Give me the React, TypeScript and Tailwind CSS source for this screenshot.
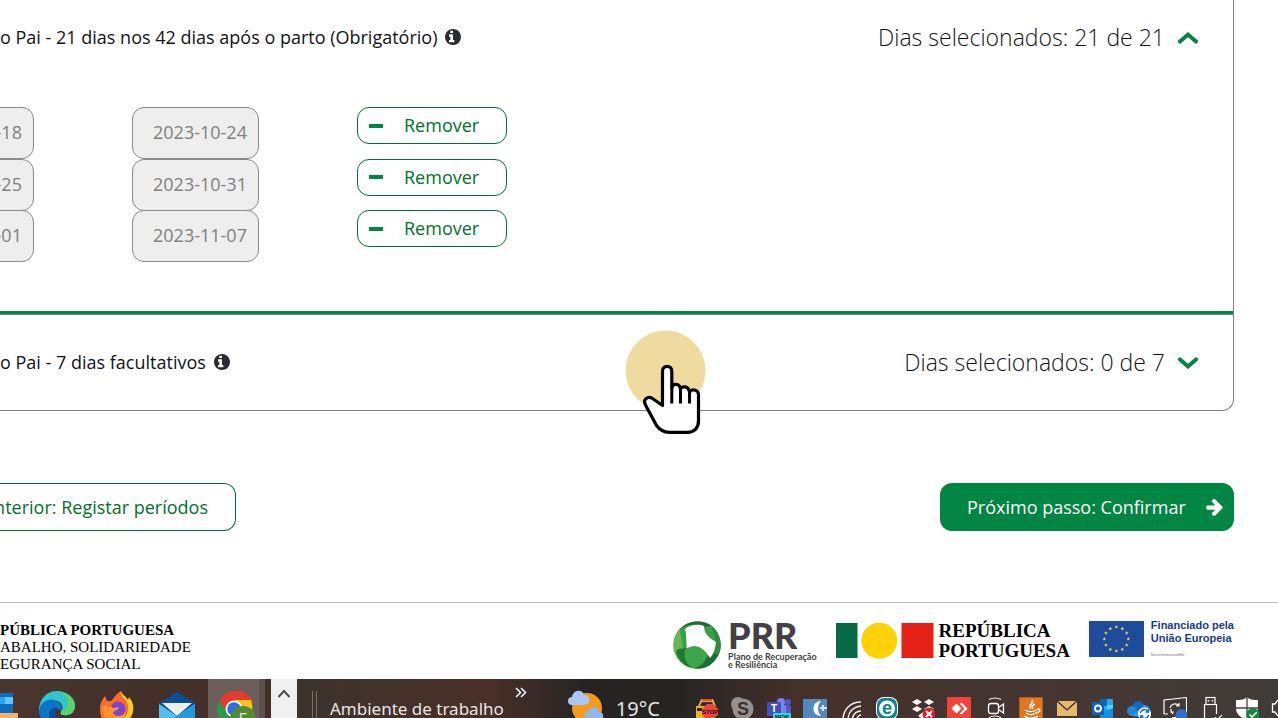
import type { ReactNode } from "react";

const periods = [
  { start: "2023-10-18", end: "2023-10-24" },
  { start: "2023-10-25", end: "2023-10-31" },
  { start: "2023-11-01", end: "2023-11-07" },
];

const InfoIcon = () => (
  <svg viewBox="128 128 1536 1536" className="w-4 h-4 text-[#2b2b33]" fill="currentColor">
    <path d="M1024 1376v-160q0-14-9-23t-23-9h-96v-512q0-14-9-23t-23-9h-320q-14 0-23 9t-9 23v160q0 14 9 23t23 9h96v320h-96q-14 0-23 9t-9 23v160q0 14 9 23t23 9h448q14 0 23-9t9-23zM896 480v-160q0-14-9-23t-23-9h-192q-14 0-23 9t-9 23v160q0 14 9 23t23 9h192q14 0 23-9t9-23zM1664 896q0 209-103 385.5t-279.5 279.5-385.5 103-385.5-103-279.5-279.5-103-385.5 103-385.5 279.5-279.5 385.5-103 385.5 103 279.5 279.5 103 385.5z" />
  </svg>
);

const ArrowRight = () => (
  <svg viewBox="96 192 1536 1536" className="w-[17px] h-[17px]" fill="currentColor">
    <path d="M1600 960q0 54-37 91l-651 651q-39 37-91 37-51 0-90-37l-75-75q-38-38-38-91t38-91l293-293h-704q-52 0-84.5-37.5t-32.5-90.5v-128q0-53 32.5-90.5t84.5-37.5h704l-293-294q-38-36-38-90t38-90l75-75q38-38 90-38 53 0 91 38l651 651q37 35 37 90z" />
  </svg>
);

const Chevron = ({ up }: { up: boolean }) => (
  <svg viewBox="0 0 22 14" className="w-[22px] h-[14px] text-[#008542]" fill="none" stroke="currentColor" strokeWidth="4" strokeLinecap="round">
    {up ? <path d="M3 11.6 L11 4.6 L19 11.6" /> : <path d="M3 4.4 L11 11.4 L19 4.4" />}
  </svg>
);

type PeriodHeaderProps = { title: string; count: string; open: boolean };

const PeriodHeader = ({ title, count, open }: PeriodHeaderProps) => (
  <button
    type="button"
    aria-expanded={open}
    className="w-full flex items-center justify-between pb-0.5 pr-[34px] text-left text-[#121216]"
  >
    <span className="flex items-center gap-2 text-[18px] leading-6">
      {title}
      <InfoIcon />
    </span>
    <span className="flex items-center gap-3 text-[23px] leading-8 font-light">
      {count}
      <Chevron up={open} />
    </span>
  </button>
);

const PeriodRow = ({ start, end }: { start: string; end: string }) => (
  <div className="flex items-start gap-[98px] -ml-[93px]">
    <input
      aria-label="Data de início"
      defaultValue={start}
      disabled
      className="w-[127px] h-[52px] pl-5 pb-0.5 rounded-xl border border-[#8a8a8a] bg-[#eeeeee] text-[#808080]"
    />
    <input
      aria-label="Data de fim"
      defaultValue={end}
      disabled
      className="w-[127px] h-[52px] pl-5 pb-0.5 rounded-xl border border-[#8a8a8a] bg-[#eeeeee] text-[#808080]"
    />
    <button
      type="button"
      className="w-[150px] h-[37px] pl-[11px] flex items-center gap-[21px] rounded-xl border border-[#00702d] bg-white text-[#00702d]"
    >
      <span className="w-[14px] h-1 bg-[#008542]" />
      Remover
    </button>
  </div>
);

const HandCursor = () => (
  <svg viewBox="0 0 82 106" className="absolute left-[625px] top-[330px] w-[82px] h-[106px] pointer-events-none">
    <circle cx="40.5" cy="40.5" r="40" fill="#efdb9f" />
    <path
      d="M37.5 75.5 V41 C37.5 34.7 46.8 34.7 46.8 41 V58 C47.5 53 55 53 55.5 59.5 C56 55.5 64 55.5 64.5 62.5 C65.5 58.5 73.5 59 73.5 65 V91 C73.5 98 69 102.3 62.5 102.3 H44 C38 102.3 34.5 99.5 31.5 95.5 L20.5 75 C17.5 69.5 23 65.5 27.5 68.5 Z"
      fill="#fff"
      stroke="#000"
      strokeWidth="3.2"
      strokeLinejoin="round"
    />
    <path d="M46.8 56 V73.5 M55.5 59 V73.5 M64.5 62 V73.5" fill="none" stroke="#000" strokeWidth="3" />
  </svg>
);

/* Footer logos */

const PrrLogo = () => (
  <div className="flex items-start gap-[7px]">
    <svg viewBox="0 0 48 48" className="w-12 h-12">
      <circle cx="24" cy="24" r="23.7" fill="#37a048" />
      <path d="M7 9 C15 -1 30 -2 39 5 L30 6 C21 1 13 4 7 9Z" fill="#1f6b35" />
      <path d="M38 4 C49 13 50 27 45 35 L40 34 C44 25 42 12 38 4Z" fill="#2f8a3e" />
      <path d="M45 34 C39 46 30 49 20 47 C32 43 34 35 38 30Z" fill="#1d6e35" />
      <path d="M4 36 C-1 25 0 14 7 9 L10 28Z" fill="#68b552" />
      <path d="M5 28 L14 27 C11 33 12 40 19 47 C11 45 5 38 3 31Z" fill="#1d7a36" />
      <path d="M12 8 C18 3 26 3 31 5 C31 11 34 16 43 21 C42 29 40 34 37 37 C32 28 22 22 14 28 C13 22 14 15 12 8Z" fill="#fff" />
      <path d="M12 29 C18 23 28 24 33 32 C35 38 29 46 21 47 C13 44 10 36 12 29Z" fill="#3da64b" />
    </svg>
    <div className="font-['Lato'] text-[#414044] font-bold text-[9px] leading-[8px]">
      <div className="font-black text-[36px] leading-[28px] mb-1">PRR</div>
      Plano de Recuperação
      <br />e Resiliência
    </div>
  </div>
);

const RepublicLogo = () => (
  <div className="flex items-start gap-[5px]">
    <svg viewBox="0 0 98 36" className="w-[98px] h-9 mt-0.5">
      <rect width="21.5" height="35" fill="#056b47" />
      <circle cx="43.3" cy="17.7" r="18" fill="#ffd106" />
      <rect x="65.5" width="32" height="35" fill="#e62117" />
    </svg>
    <div className="font-['Liberation_Serif'] font-bold text-[19px] leading-5 text-black">
      REPÚBLICA
      <br />
      PORTUGUESA
    </div>
  </div>
);

const stars = Array.from({ length: 12 }, (_, i) => {
  const angle = (i * Math.PI) / 6;
  return { x: 27.3 + 12 * Math.sin(angle), y: 18 - 12 * Math.cos(angle) };
});

const EuLogo = () => (
  <div className="flex items-start gap-[7px]">
    <svg viewBox="0 0 55 36" className="w-[55px] h-9">
      <rect width="55" height="36" fill="#1e4c9a" />
      {stars.map((s, i) => (
        <path
          key={i}
          transform={`translate(${s.x} ${s.y})`}
          d="M0 -2 L.5 -.6 L1.9 -.6 L.8 .3 L1.2 1.6 L0 .8 L-1.2 1.6 L-.8 .3 L-1.9 -.6 L-.5 -.6Z"
          fill="#f4e04d"
        />
      ))}
    </svg>
    <div className="font-['Liberation_Sans'] text-[#173c8e] text-[11px] leading-[13px] font-bold -mt-0.5">
      Financiado pela
      <br />
      União Europeia
      <div className="text-[4px] leading-[20px] font-normal text-gray-500">NextGenerationEU</div>
    </div>
  </div>
);

/* Taskbar */

const AppIcon = ({ children }: { children: ReactNode }) => (
  <svg viewBox="0 0 36 36" className="w-9 h-9 shrink-0">{children}</svg>
);

const trayIcons: ReactNode[] = [
  // traffic stop
  <>
    <path d="M6 3h12l3 7H3z" fill="#f0a52b" />
    <rect x="7" y="3" width="10" height="2" fill="#e84b32" />
    <path d="M7 6h10l2 4H5z" fill="#27333d" />
    <rect x="1" y="10" width="9" height="12" fill="#efb12b" />
    <rect x="2" y="12" width="5" height="3" fill="#252525" />
    <path d="M12 8h6l5 5v6l-5 4h-6l-5-4v-6z" fill="#f0433a" />
    <text x="15" y="18" fontSize="6" fontWeight="bold" textAnchor="middle" fill="#111">STOP</text>
  </>,
  // skype
  <>
    <circle cx="12" cy="13" r="10.5" fill="#969190" />
    <circle cx="7" cy="8" r="7" fill="#969190" />
    <text x="12" y="19" fontSize="18" fontWeight="bold" textAnchor="middle" fill="#3b302e">S</text>
  </>,
  // teams
  <>
    <circle cx="14" cy="6" r="4" fill="#7b83eb" />
    <circle cx="21" cy="6" r="3" fill="#5059c9" />
    <rect x="16" y="9" width="8" height="10" rx="2" fill="#5059c9" />
    <rect x="7" y="9" width="12" height="13" rx="2" fill="#7b83eb" />
    <rect y="6" width="14" height="14" rx="1" fill="#464eb8" />
    <text x="7" y="16" fontSize="10" fontWeight="bold" textAnchor="middle" fill="#fff">T</text>
    <rect x="6" y="17" width="18" height="7" rx="1" fill="#21dbe6" />
    <text x="15" y="23" fontSize="6" fontWeight="bold" textAnchor="middle" fill="#111">NEW</text>
  </>,
  // backup client
  <>
    <rect y="3" width="24" height="21" fill="#5188bd" />
    <path d="M18 5 C8 5 8 20 18 20 C14 16 14 9 18 5Z" fill="#fff" />
    <path d="M17 12h7M20 9v6" stroke="#d7e5f1" strokeWidth="2" />
  </>,
  // signal
  <path d="M4 24C4 14 11 6 22 6M9 24C9 16 14 11 22 10M13 24C14 18 17 15 22 15M18 24C18 21 20 19 22 19" stroke="#eee" strokeWidth="1.5" fill="none" />,
  // eset
  <>
    <rect x="1" y="1" width="22" height="23" rx="8" fill="#fff" />
    <rect x="2" y="2" width="20" height="21" rx="7" fill="#0c8390" />
    <circle cx="12" cy="12.5" r="8" fill="#fff" />
    <text x="12" y="17.5" fontSize="18" fontWeight="bold" textAnchor="middle" fill="#0c8390">e</text>
  </>,
  // dropbox
  <>
    <path d="M6 3l5 3-5 3-5-3zM18 3l5 3-5 3-5-3zM6 10l5 3-5 3-5-3zM18 10l5 3-5 3-5-3zM12 16l5 3-5 4-5-3z" fill="#fff" />
    <circle cx="18" cy="18" r="6.5" fill="#dc1f2b" />
    <path d="M15 15l6 6M21 15l-6 6" stroke="#fff" strokeWidth="1.8" />
  </>,
  // anydesk
  <>
    <rect y="1" width="24" height="23" fill="#ef443b" />
    <path d="M9.5 7.5l5 5-5 5-5-5z" fill="#fff" />
    <path d="M13 8l1.5-1.500 6 6-6 6L13 17l4.5-4.5z" fill="#fff" />
  </>,
  // meet now
  <>
    <path d="M6 3.5C10 1.5 14 1.5 18 3.5M6 21.5C10 19.5 14 19.5 18 21.5" stroke="#fff" strokeWidth="1.2" fill="none" />
    <rect x="5.5" y="7.5" width="10" height="10" rx="2.5" stroke="#fff" strokeWidth="1.3" fill="none" />
    <path d="M15.5 11.5l5-3.5v9l-5-3.5" stroke="#fff" strokeWidth="1.3" fill="none" />
  </>,
  // java
  <>
    <rect x=".5" y="1.5" width="23" height="23" fill="#df7621" stroke="#b85b16" />
    <path d="M13 4c3 3-5 5-1 9M16 8c-4 2-3 3-2 5" stroke="#fff" strokeWidth="1.5" fill="none" />
    <path d="M6 14c3 2 8 2 12 0M7 17c3 2 7 2 10 0M5 20c4 3 10 3 14 0M18 13c4-1 4 3-1 4" stroke="#fff" strokeWidth="1.3" fill="none" />
  </>,
  // mail
  <>
    <rect x="2" y="5" width="20" height="15" fill="#e8b96c" />
    <path d="M2 5l10 9 10-9" stroke="#382a26" strokeWidth="1.3" fill="none" />
  </>,
  // outlook
  <>
    <rect x="9" y="3" width="13" height="15" rx="1" fill="#28a8ea" />
    <rect x="9" y="3" width="7" height="7" fill="#1066b5" />
    <rect x="16" y="9" width="6" height="6" fill="#50d9ff" />
    <path d="M9 16l13-4v12H9z" fill="#1490df" />
    <rect x="1" y="6" width="12" height="13" rx="1" fill="#0c62ba" />
    <circle cx="7" cy="12.5" r="3" stroke="#fff" strokeWidth="1.8" fill="none" />
  </>,
  // onedrive
  <>
    <circle cx="11" cy="11" r="6" fill="#1267b8" />
    <circle cx="5" cy="15" r="5" fill="#2186d8" />
    <path d="M5 20L17 9c5 0 7 5 7 9v4z" fill="#2d9ae8" />
    <circle cx="17.5" cy="18" r="6.5" fill="#fff" />
    <path d="M13.5 17a4 4 0 0 1 7-2l1 1M21.5 13v3h-3M21.5 19a4 4 0 0 1-7 2l-1-1M13.5 23v-3h3" stroke="#1267b8" strokeWidth="1.4" fill="none" />
  </>,
  // update
  <>
    <path d="M23.5 1.5v18L9 22M1 18V4l22.5-2.5M1 18h4" stroke="#fff" strokeWidth="1.2" fill="none" />
    <path d="M7 12a5 5 0 0 1 8-3l1 1M16 7v3h-3M8 13v3h3M8 15l2 3" stroke="#fff" strokeWidth="1.2" fill="none" />
    <circle cx="18.5" cy="19" r="6" fill="#2b71c7" />
  </>,
  // usb
  <>
    <rect x="7" y="1.5" width="9" height="7" stroke="#fff" strokeWidth="1.2" fill="none" />
    <path d="M9.5 4v1.5M13.5 4v1.5" stroke="#fff" strokeWidth="1.5" />
    <path d="M5.5 24V8.5h12V18M16 21l2 3 5-5" stroke="#fff" strokeWidth="1.2" fill="none" />
  </>,
  // defender
  <>
    <path d="M12 1c3 3 7 3 11 3v8c0 7-6 10-11 12C7 22 1 19 1 12V4c4 0 8 0 11-3z" fill="#fff" />
    <path d="M12 1v22M1 12h22" stroke="#4a3f3b" strokeWidth="1.3" />
    <circle cx="18" cy="18.5" r="6.5" fill="#0d8a41" />
    <path d="M14.5 18.5l2.5 2.5 5-5" stroke="#fff" strokeWidth="1.6" fill="none" />
  </>,
];

const Taskbar = () => (
  <div className="h-[39px] flex items-start overflow-hidden bg-[#45302b] font-['Noto_Sans'] text-[#e9e4e2]">
    <div className="w-[271px] h-full shrink-0 flex items-start bg-linear-to-r from-[#4b362f] via-[#43302b] to-[#452d28]">
      <svg viewBox="0 0 18 28" className="w-[18px] h-7 mt-3 mr-[21px]">
        <rect y="2" width="13" height="24" fill="#0a6dc2" />
        <path d="M0 6h13v7H0z" fill="#2aa5e8" />
        <path d="M5 6h8v7H5z" fill="#65c8f3" />
        <rect y="22" width="18" height="6" fill="#f2b46b" />
      </svg>
      <div className="flex gap-6 pt-3">
        <AppIcon>
          <path d="M18 0c10 0 18 7 18 15 0 7-6 10-11 9-4 0-4-2-2-5 2-6-3-10-9-9C7 10 1 15 0 22 -1 9 7 0 18 0z" fill="#31c5cf" />
          <path d="M22 1c8 1 14 7 14 14 0 7-6 10-11 9-4 0-4-2-2-5 7 1 9-13-1-18z" fill="#5ad36a" />
          <path d="M0 20C1 11 10 6 17 10c5 2 7 6 5 10C16 14 10 18 10 24c0 7 4 11 9 12C8 36 0 28 0 20z" fill="#0b76c7" />
          <path d="M10 24c0-6 5-9 9-7-4 3-4 12 3 16l-3 3c-5-1-9-6-9-12z" fill="#0c4e9a" />
        </AppIcon>
        <AppIcon>
          <path d="M1 19c0-7 2-10 5-14l2 5 4 0c3-3 6-8 10-10 0 5 6 6 8 10l2 1c4 8 2 23-14 25C7 36 1 28 1 19z" fill="#ff6a2b" />
          <path d="M22 0c-1 7 6 8 7 15 1 7-3 13-9 15 10 0 16-7 14-16-1-5-3-6-4-8l-1 3C27 5 23 4 22 0z" fill="#ffc927" />
          <circle cx="19" cy="18" r="7.5" fill="#7b45cf" />
          <path d="M3 16c4-3 9-1 11 1l6-1c-1 4-5 3-6 6 2 4 9 4 12 0 0 8-8 12-15 8-6-3-8-8-8-14z" fill="#ff9131" />
        </AppIcon>
        <AppIcon>
          <path d="M0 12L18 1l18 11v24H0z" fill="#0a4f96" />
          <path d="M3 12h30L18 25z" fill="#eeeeea" />
          <path d="M0 13l18 12L0 36z" fill="#55bdf0" />
          <path d="M36 13L0 36h36z" fill="#37a9ea" />
          <path d="M36 13L18 25l-9 5 27 6z" fill="#2796dc" />
        </AppIcon>
      </div>
      <div className="w-[51px] h-full ml-[13px] pt-3 pl-2 bg-[#6b5f5b]">
        <svg viewBox="0 0 40 36" className="w-10 h-9">
          <circle cx="19" cy="18" r="18" fill="#29994a" />
          <path d="M3 10C10-4 30-4 36 10H19z" fill="#e33b2e" />
          <path d="M3 9l8 13 8-12z" fill="#e33b2e" />
          <path d="M19 9h16c3 8 1 19-9 25l-3-12z" fill="#fbc116" />
          <circle cx="18" cy="18" r="8.5" fill="#fff" />
          <circle cx="18" cy="18" r="6.8" fill="#2f6fe0" />
          <circle cx="27" cy="28" r="13" fill="#54893a" />
          <text x="27" y="34" fontSize="16" textAnchor="middle" fill="#d5e6c6">E</text>
        </svg>
      </div>
      <div className="w-[6px] h-full bg-[#5c4f4c]" />
    </div>

    <button type="button" aria-label="Deslocar para cima" className="w-[26px] h-full shrink-0 flex justify-center items-start pt-2 bg-[#f0f0f0]">
      <svg viewBox="0 0 14 14" className="w-[14px] h-[14px]" fill="none" stroke="#4a4a4a" strokeWidth="2">
        <path d="M1.5 10L7 4l5.5 6" />
      </svg>
    </button>

    <div className="grow h-full flex items-start bg-linear-to-r from-[#3b332c] via-[#4a2f28] via-50% to-[#262423] to-75%">
      <div className="w-[5px] h-[27px] mt-3 ml-[15px] border-x border-[#77706c]" />
      <span className="ml-[13px] mt-[18px] text-[17px] leading-6 whitespace-nowrap">Ambiente de trabalho</span>
      <button type="button" aria-label="Mostrar mais" className="mt-2 ml-[11px] text-white">
        <svg viewBox="0 0 12 11" className="w-3 h-[11px]" fill="none" stroke="currentColor" strokeWidth="1.5">
          <path d="M1 1l4.5 4.5L1 10M6 1l4.5 4.5L6 10" />
        </svg>
      </button>
      <svg viewBox="0 0 36 28" className="w-9 h-7 mt-[11px] ml-[41px]">
        <circle cx="19" cy="18" r="15" fill="#f59a1e" />
        <path d="M4 15a4 4 0 0 1 0-8c1-8 11-8 12-2 7 0 7 9 1 10z" fill="#a9c7f1" />
        <path d="M18 28c-4-5 1-8 3-7 2-6 10-4 10 1 5 0 5 6 3 7z" fill="#8eb7ee" />
      </svg>
      <span className="ml-3 mt-[18px] text-[20px] leading-6">19°C</span>
    </div>

    <div className="h-full shrink-0 flex gap-3 pt-[17px] pl-4 bg-linear-to-r from-[#262423] via-[#46302a] via-20% to-[#413b38]">
      {trayIcons.map((icon, i) => (
        <svg key={i} viewBox="0 0 24 24" className="w-6 h-6 shrink-0 font-['Liberation_Sans']">
          {icon}
        </svg>
      ))}
      <svg viewBox="0 0 7 24" className="w-[7px] h-6">
        <path d="M7 4L4 8H1.5v8H4l3 4" stroke="#fff" strokeWidth="1.3" fill="none" />
      </svg>
    </div>
  </div>
);

const App = () => {
  return (
    <div className="relative overflow-hidden bg-white font-['Open_Sans',sans-serif] text-[18px]">
      <main>
        <div className="mr-11 border-r border-b border-[#808080] rounded-br-xl">
          <section>
            <div className="h-[75px] flex">
              <PeriodHeader
                title="o Pai - 21 dias nos 42 dias após o parto (Obrigatório)"
                count="Dias selecionados: 21 de 21"
                open
              />
            </div>
            <div className="h-[155px] mt-8 mb-[49px] grid grid-rows-3">
              {periods.map((p) => (
                <PeriodRow key={p.end} start={p.start} end={p.end} />
              ))}
            </div>
          </section>
          <div className="h-1 bg-[#008542] border-b border-[#808080]" />
          <section className="h-[95px] flex">
            <PeriodHeader title="o Pai - 7 dias facultativos" count="Dias selecionados: 0 de 7" open={false} />
          </section>
        </div>

        <div className="mt-[72px] mr-11 flex justify-between">
          <button
            type="button"
            className="-ml-3 w-[248px] h-12 pr-[27px] text-right whitespace-nowrap rounded-r-xl border border-l-0 border-[#00702d] text-[#00702d]"
          >
            nterior: Registar períodos
          </button>
          <button
            type="button"
            className="w-[294px] h-12 pl-[27px] pr-[11px] flex items-center justify-between rounded-xl bg-[#008542] text-white"
          >
            Próximo passo: Confirmar
            <ArrowRight />
          </button>
        </div>
      </main>

      <footer className="h-[77px] mt-[71px] pt-[18px] pr-11 flex justify-between items-start border-t border-[#bdbdbd]">
        <div className="mt-px font-['Liberation_Serif'] text-[15px] leading-[17px] text-black whitespace-nowrap">
          <div className="font-bold">PÚBLICA PORTUGUESA</div>
          ABALHO, SOLIDARIEDADE
          <br />
          EGURANÇA SOCIAL
        </div>
        <div className="flex items-start gap-[19px]">
          <PrrLogo />
          <RepublicLogo />
          <EuLogo />
        </div>
      </footer>

      <Taskbar />
      <HandCursor />
    </div>
  );
};

export default App;
